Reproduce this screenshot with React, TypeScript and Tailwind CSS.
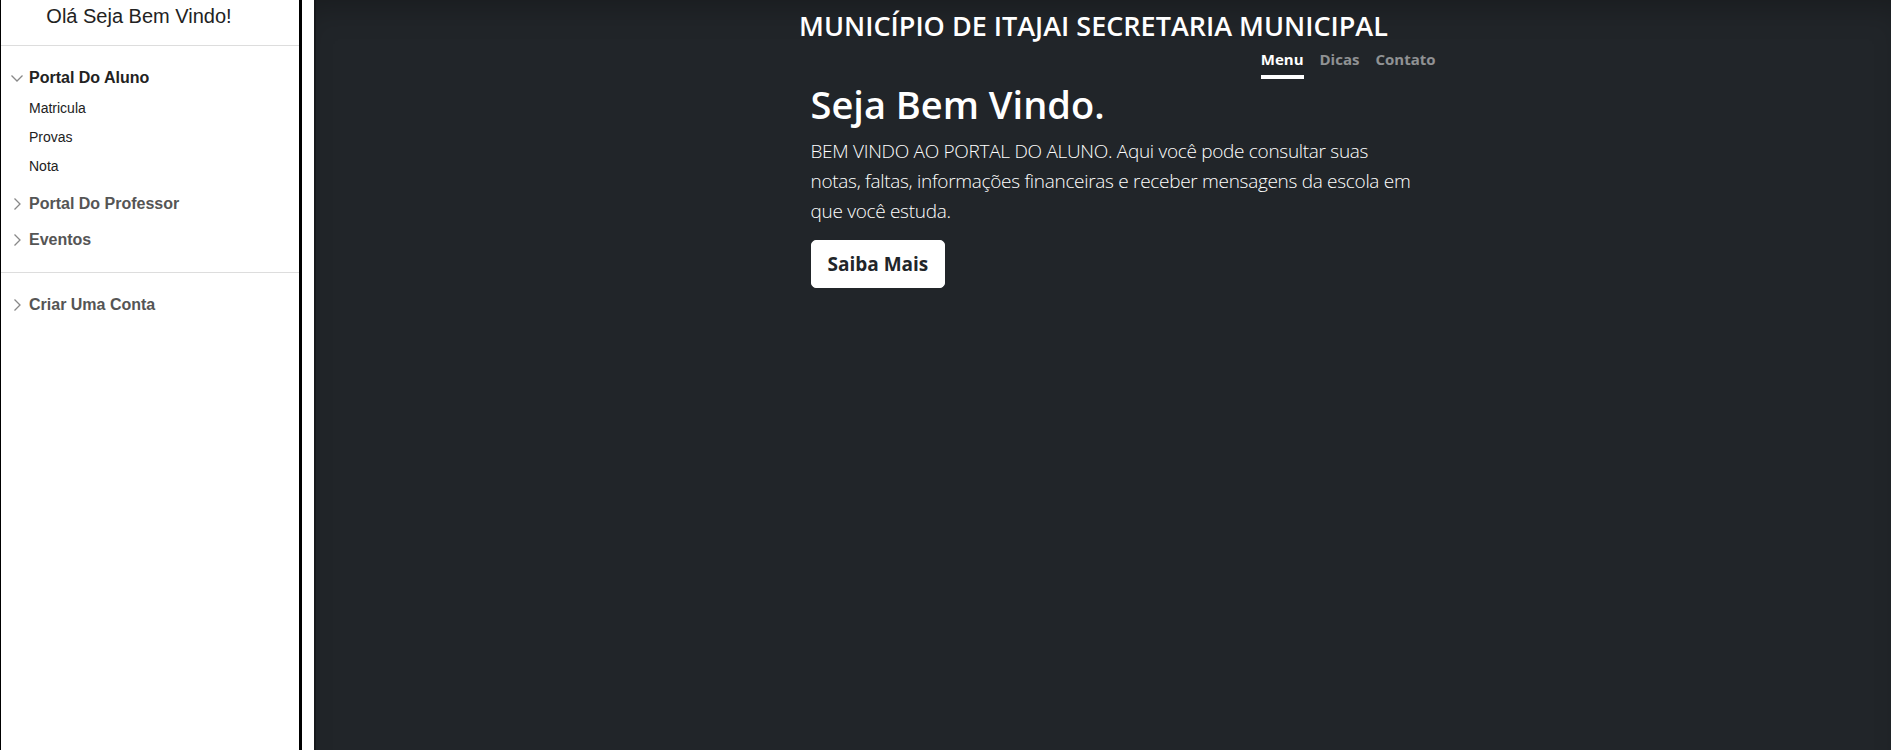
import React from 'react';

const sideFont = { fontFamily: '"Liberation Sans", Arial, sans-serif' };
const mainFont = { fontFamily: '"Open Sans", "Noto Sans", sans-serif' };

function Chevron({ open }: { open?: boolean }) {
    if (open) {
        return (
            <svg width="14" height="14" viewBox="0 0 14 14" className="shrink-0">
                <path d="M1.5 4.5 L7 10 L12.5 4.5" fill="none" stroke="#888" strokeWidth="1.3" />
            </svg>
        );
    }
    return (
        <svg width="14" height="14" viewBox="0 0 14 14" className="shrink-0">
            <path d="M4.5 1.5 L10 7 L4.5 12.5" fill="none" stroke="#888" strokeWidth="1.3" />
        </svg>
    );
}

function MenuRow({ label, open, dark }: { label: string; open?: boolean; dark?: boolean }) {
    return (
        <div className="flex items-center h-[30px] pl-[9px] gap-[5px]">
            <Chevron open={open} />
            <span className={`text-[16px] font-bold ${dark ? 'text-[#222]' : 'text-[#555]'}`}>{label}</span>
        </div>
    );
}

function Sidebar() {
    const subItems = ['Matricula', 'Provas', 'Nota'];

    return (
        <aside className="w-[302px] h-full shrink-0 bg-white border-l border-r-[3px] border-black" style={sideFont}>
            <div className="h-[46px] border-b border-[#ddd] pt-[4px] pr-[22px] text-center text-[20px] leading-[24px] text-[#222]">
                Olá Seja Bem Vindo!
            </div>

            <div className="pt-[17px]">
                <MenuRow label="Portal Do Aluno" open dark />
                <ul className="mt-[1px]">
                    {subItems.map((item) => (
                        <li key={item} className="h-[29px] flex items-center pl-[28px] text-[14px] text-[#222]">
                            {item}
                        </li>
                    ))}
                </ul>
                <div className="mt-[5px]">
                    <div className="h-[36px] flex items-center"><div className="w-full"><MenuRow label="Portal Do Professor" /></div></div>
                    <div className="h-[36px] flex items-center"><div className="w-full"><MenuRow label="Eventos" /></div></div>
                </div>
            </div>

            <div className="mt-[14px] border-t border-[#ddd]" />

            <div className="mt-[17px]">
                <MenuRow label="Criar Uma Conta" />
            </div>
        </aside>
    );
}

export default function App() {
    return (
        <div className="flex h-[750px] w-full bg-white overflow-hidden">
            <Sidebar />
            <div className="w-[12px] shrink-0 bg-white" />

            <main
                className="flex-1 h-full bg-[#212529] border-l-2 border-[#16181b] text-white shadow-[inset_0_22px_30px_-14px_rgba(0,0,0,0.25)]"
                style={mainFont}
            >
                <div className="w-[672px] mx-auto pl-[43px] pr-[4px]">
                    <header>
                        <div className="pt-[10px] pr-[59px] flex justify-center">
                            <h3 className="text-[27px] leading-[32px] font-semibold whitespace-nowrap">
                                MUNICÍPIO DE ITAJAI SECRETARIA MUNICIPAL
                            </h3>
                        </div>
                        <nav className="mt-[1px] flex justify-end gap-4 text-[15px] leading-[24px] font-bold">
                            <a className="py-1 border-b-4 border-white text-white">Menu</a>
                            <a className="py-1 border-b-4 border-transparent text-white/50">Dicas</a>
                            <a className="py-1 border-b-4 border-transparent text-white/50">Contato</a>
                        </nav>
                    </header>

                    <section className="mt-[1px]">
                        <h1 className="text-[38px] leading-[48px] font-semibold mb-2">Seja Bem Vindo.</h1>
                        <p className="max-w-[607px] text-[19px] leading-[30px] font-light tracking-[-0.3px] mb-[14px]">
                            BEM VINDO AO PORTAL DO ALUNO. Aqui você pode consultar suas notas, faltas, informações financeiras e receber mensagens da escola em que você estuda.
                        </p>
                        <button className="bg-white border border-white rounded-[5px] px-4 py-2 text-[19px] leading-[30px] font-bold text-[#212529]">
                            Saiba Mais
                        </button>
                    </section>
                </div>
            </main>
        </div>
    );
}
